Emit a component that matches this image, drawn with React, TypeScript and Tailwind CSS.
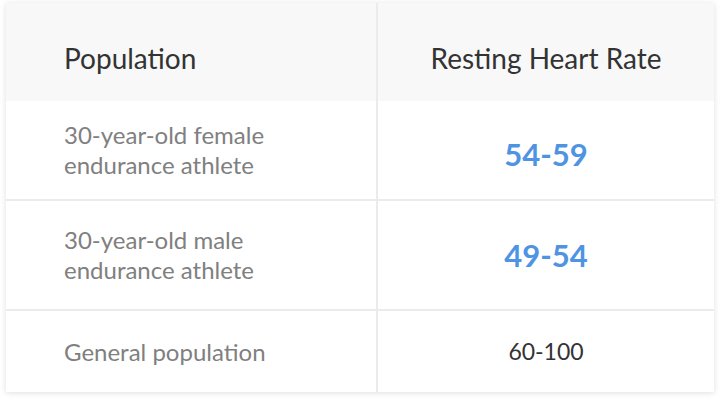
const rows = [
  { who: ["30-year-old female", "endurance athlete"], rate: "54-59", accent: true, h: "h-[100px]", nudge: "pt-[9px]" },
  { who: ["30-year-old male", "endurance athlete"], rate: "49-54", accent: true, h: "h-[110px]", nudge: "" },
  { who: ["General population"], rate: "60-100", accent: false, h: "h-[81px]", nudge: "" },
];

export default function App() {
  return (
    <div className="min-h-screen bg-white pt-[3px] pl-[6px] font-['Lato',sans-serif]">
      <div className="w-[708px] bg-white shadow-[0_1px_6px_rgba(0,0,0,0.13)]">
        <div className="grid grid-cols-[372px_1fr] h-[98px] bg-[#f8f8f8]">
          <div className="flex items-center pl-[58px] pt-[12px] border-r-2 border-[#ebebeb] text-[28px] text-[#333]">
            Population
          </div>
          <div className="flex items-center justify-center pt-[12px] text-[28px] text-[#333]">
            Resting Heart Rate
          </div>
        </div>
        {rows.map((r, i) => (
          <div
            key={r.rate}
            className={`grid grid-cols-[372px_1fr] ${r.h} ${i < rows.length - 1 ? "border-b-2 border-[#ebebeb]" : ""}`}
          >
            <div className="flex flex-col justify-center pl-[58px] border-r-2 border-[#ebebeb] text-[24px] leading-[30px] text-[#808080]">
              {r.who.map((line) => (
                <span key={line}>{line}</span>
              ))}
            </div>
            <div className={`flex items-center justify-center ${r.nudge}`}>
              {r.accent ? (
                <span className="text-[31px] font-bold text-[#4f93e3]">{r.rate}</span>
              ) : (
                <span className="text-[23px] text-[#333]">{r.rate}</span>
              )}
            </div>
          </div>
        ))}
      </div>
    </div>
  );
}
